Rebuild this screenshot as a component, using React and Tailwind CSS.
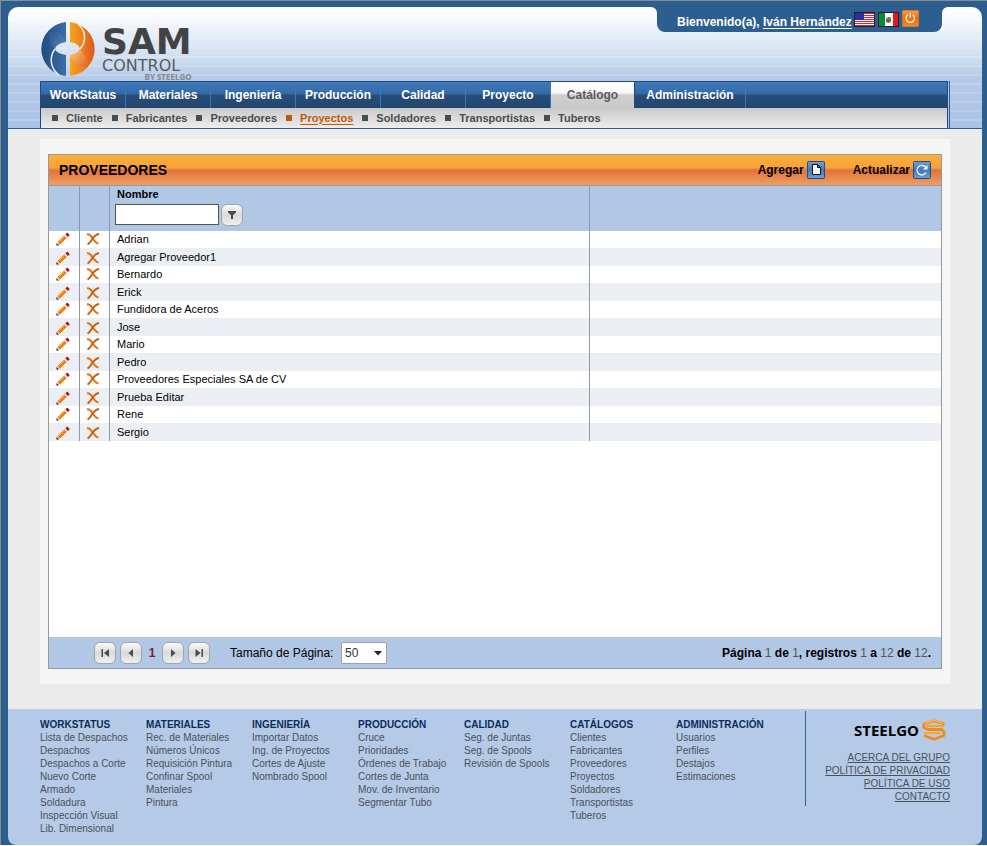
import React from "react";

const NAV = ["WorkStatus", "Materiales", "Ingeniería", "Producción", "Calidad", "Proyecto", "Catálogo", "Administración"];
const SUBNAV = ["Cliente", "Fabricantes", "Proveedores", "Proyectos", "Soldadores", "Transportistas", "Tuberos"];
const ROWS = [
  "Adrian", "Agregar Proveedor1", "Bernardo", "Erick", "Fundidora de Aceros", "Jose", "Mario", "Pedro",
  "Proveedores Especiales SA de CV", "Prueba Editar", "Rene", "Sergio",
];
const FOOTER = [
  ["WORKSTATUS", ["Lista de Despachos", "Despachos", "Despachos a Corte", "Nuevo Corte", "Armado", "Soldadura", "Inspección Visual", "Lib. Dimensional"]],
  ["MATERIALES", ["Rec. de Materiales", "Números Únicos", "Requisición Pintura", "Confinar Spool", "Materiales", "Pintura"]],
  ["INGENIERÍA", ["Importar Datos", "Ing. de Proyectos", "Cortes de Ajuste", "Nombrado Spool"]],
  ["PRODUCCIÓN", ["Cruce", "Prioridades", "Órdenes de Trabajo", "Cortes de Junta", "Mov. de Inventario", "Segmentar Tubo"]],
  ["CALIDAD", ["Seg. de Juntas", "Seg. de Spools", "Revisión de Spools"]],
  ["CATÁLOGOS", ["Clientes", "Fabricantes", "Proveedores", "Proyectos", "Soldadores", "Transportistas", "Tuberos"]],
  ["ADMINISTRACIÓN", ["Usuarios", "Perfiles", "Destajos", "Estimaciones"]],
];
const LEGAL = ["ACERCA DEL GRUPO", "POLÍTICA DE PRIVACIDAD", "POLÍTICA DE USO", "CONTACTO"];

function SamMark() {
  return (
    <svg width="56" height="56" viewBox="0 0 56 56" aria-hidden="true">
      <defs>
        <linearGradient id="samBlue" x1="0" x2="1"><stop offset="0" stopColor="#1f4c7e" /><stop offset="1" stopColor="#3b6ea8" /></linearGradient>
        <linearGradient id="samOrange" x1="0" x2="1"><stop offset="0" stopColor="#f7a51d" /><stop offset="1" stopColor="#dd5a1c" /></linearGradient>
        <linearGradient id="samBlueGlow" x1="0" x2="1" y2="1"><stop offset="0" stopColor="#2c5c95" /><stop offset="1" stopColor="#7da3d2" /></linearGradient>
        <linearGradient id="samOrangeGlow" x1="0" y1="0" x2="1" y2="1"><stop offset="0" stopColor="#ffd39a" /><stop offset="1" stopColor="#e2641d" /></linearGradient>
      </defs>
      <path d="M26 1.100A27 27 0 0 0 26 54.900V34C20 33 16 31 15 28C16 24 20 22 26 21Z" fill="url(#samBlue)" />
      <path d="M30 1.100A27 27 0 0 1 30 54.900V34C36 33 39 31 40 28C39 24 36 22 30 21Z" fill="url(#samOrange)" />
      <path d="M8 11C16 9 23 12 26 21C20 22 16 24 15 28Q8 20 8 11Z" fill="url(#samBlueGlow)" opacity=".4" />
      <path d="M47 45C39 47 33 44 30 34C36 33 39 31 40 28Q47 36 47 45Z" fill="url(#samOrangeGlow)" opacity=".8" />
      <path d="M15 28C9 36 10 47 19 54" fill="none" stroke="#e8f0fa" strokeWidth="1.500" />
      <path d="M40 28C47 20 46 9 37 2" fill="none" stroke="#f6efe6" strokeWidth="1.500" />
    </svg>
  );
}

function UsFlag() {
  return (
    <svg width="21" height="15" viewBox="0 0 21 15" aria-hidden="true" shapeRendering="crispEdges">
      <rect width="21" height="15" fill="#222" />
      <rect x="1" y="1" width="19" height="13" fill="#fff" />
      {[1, 3, 5, 7, 9, 11, 13].map((y) => <rect key={y} x="1" y={y} width="19" height="1" fill="#e0202c" />)}
      <rect x="1" y="1" width="9" height="7" fill="#2b2fa3" />
    </svg>
  );
}

function MxFlag() {
  return (
    <svg width="21" height="15" viewBox="0 0 21 15" aria-hidden="true">
      <rect width="21" height="15" fill="#222" />
      <rect x="1" y="1" width="6" height="13" fill="#0a8a3c" />
      <rect x="7" y="1" width="8" height="13" fill="#fff" />
      <rect x="15" y="1" width="5" height="13" fill="#f0141e" />
      <path d="M8 8C8 5 12 4 13 6V9L11 11L8 10Z" fill="#5b6a45" />
      <path d="M9 7L11 6L12 8" stroke="#a08050" fill="none" />
    </svg>
  );
}

function Power() {
  return (
    <svg width="17" height="17" viewBox="0 0 17 17" aria-hidden="true">
      <defs><linearGradient id="pw" x2="0" y2="1"><stop offset="0" stopColor="#f5a04c" /><stop offset=".5" stopColor="#ec6d0a" /><stop offset="1" stopColor="#f28a28" /></linearGradient></defs>
      <rect x=".5" y=".5" width="16" height="16" rx="1" fill="url(#pw)" stroke="#e0741e" />
      <path d="M5.800 4.800A4.200 4.200 0 1 0 10.800 4.800" fill="none" stroke="#fff" strokeWidth="1.200" />
      <path d="M8.300 3V8" stroke="#fff" strokeWidth="1.200" />
    </svg>
  );
}

function ActionIcon({ kind }) {
  return (
    <svg width="18" height="18" viewBox="0 0 18 18" aria-hidden="true">
      <defs><linearGradient id="act" x2="0" y2="1"><stop offset="0" stopColor="#6f9fdb" /><stop offset=".5" stopColor="#3f78bd" /><stop offset="1" stopColor="#6d9fda" /></linearGradient></defs>
      <rect x=".5" y=".5" width="17" height="17" rx="1" fill="url(#act)" stroke="#244d80" />
      {kind === "new" ? (
        <path d="M5.500 3.500H10.500L13.500 6.500V13.500H5.500ZM10.500 3.500V6.500H13.500" fill="#f4f4f4" stroke="#111" />
      ) : (
        <>
          <path d="M13 11.500A4.800 4.800 0 1 1 12.500 6" fill="none" stroke="#fff" strokeWidth="1.200" />
          <path d="M14.500 4V8.500H10Z" fill="#fff" />
        </>
      )}
    </svg>
  );
}

function Pencil() {
  return (
    <svg width="14" height="14" viewBox="0 0 14 14" aria-hidden="true" className="block">
      <path d="M2.500 11.500L9.500 4.800" stroke="#f47a0c" strokeWidth="3.600" />
      <path d="M2.400 10.300L8.600 4.400" stroke="#ffab45" strokeWidth="1" />
      <path d="M9.500 3L11.300 4.900" stroke="#f3e6d8" strokeWidth="1" />
      <path d="M10.600 3.700L12.600 1.900" stroke="#b01218" strokeWidth="3.600" />
      <path d="M.5 13.500V11L3 13.500Z" fill="#111" />
    </svg>
  );
}

function Cross() {
  return (
    <svg width="14" height="14" viewBox="0 0 14 14" aria-hidden="true" className="block" fill="none">
      <path d="M1 2.500C3.500 1.500 5 4 6.500 6.300C8.500 9 10.500 11.200 12.500 11.500" stroke="#e8700f" strokeWidth="2" />
      <path d="M13 2C9.500 2.500 7.500 5.200 6 7.500C4.500 9.800 3 11.800 1.500 12.500" stroke="#c85c0c" strokeWidth="1.800" />
    </svg>
  );
}

const GLYPHS = {
  first: "M7.500 7H9V15H7.500ZM15 7V15L10 11Z",
  prev: "M13 7V15L8.500 11Z",
  next: "M9 7V15L13.500 11Z",
  last: "M7.500 7V15L12.500 11ZM13.500 7H15V15H13.500Z",
  filter: "M7 7H15V8.500L12 11V15H10V11L7 8.500Z",
};

function GlossyButton({ glyph, label }) {
  return (
    <button type="button" aria-label={label} className="size-[22px] shrink-0 rounded-[6px] border border-[#a4a4a4] bg-linear-to-b from-[#fbfbfb] via-[#d9d9d9] to-[#f0f0f0]">
      <svg width="22" height="22" viewBox="0 0 22 22" aria-hidden="true" className="-m-px block">
        <path d={GLYPHS[glyph]} fill="#4a4a4a" />
      </svg>
    </button>
  );
}

function SteelgoMark() {
  return (
    <svg width="24" height="22" viewBox="0 0 24 22" aria-hidden="true">
      <path d="M22.500 5L12 1.800L1.800 5V8.500L6 10.500H19.500L22 12.500V16.500L12 20.200L2 16.500" fill="none" stroke="#f58a12" strokeWidth="2.800" strokeLinejoin="round" />
      <path d="M4.500 7H22M2 14H18.500" fill="none" stroke="#f9a32a" strokeWidth="1.800" />
      <path d="M21 4.500L12 1.500L3 4.500" fill="none" stroke="#ffc45c" />
    </svg>
  );
}

function Header() {
  return (
    <header className="overflow-hidden rounded-t-[10px] border-b border-[#2d5e90] bg-[repeating-linear-gradient(to_bottom,transparent_0_4px,rgba(255,255,255,.15)_4px_6px,transparent_6px_9px),linear-gradient(to_bottom,#ffffff_0,#f3f7fc_15px,#cfdef1_50px,#b6cae7_72px,#a9c3e6_121px)] px-8">
      <div className="flex h-[74px] items-start justify-between">
        <a href="#inicio" aria-label="SAM Control by Steelgo" className="flex items-start gap-[6px] pt-[14px]">
          <SamMark />
          <span className="flex flex-col pt-1 font-['DejaVu_Sans',sans-serif]">
            <span className="text-[36px] leading-[34px] font-bold text-[#434345]">SAM</span>
            <span className="text-[16px] leading-[13px] text-[#5a5a5c]">CONTROL</span>
            <span className="self-end font-['Open_Sans',sans-serif] text-[8px] leading-[10px] font-bold text-[#85878a]">BY STEELGO</span>
          </span>
        </a>
        <div className="mr-[2px] flex items-start">
          <svg width="6" height="6" viewBox="0 0 6 6" aria-hidden="true"><path d="M0 0H6V6A6 6 0 0 0 0 0Z" fill="#2d5e90" /></svg>
          <div className="flex h-[25px] w-[285px] items-start rounded-b-[8px] bg-[#2d5e90] pl-5 text-[12px] font-bold text-white">
            <p className="w-[177px] pt-[7px] leading-4 whitespace-nowrap">
              Bienvenido(a), <a href="#perfil" className="underline underline-offset-2">Iván Hernández</a>
            </p>
            <div className="flex items-start gap-[3px] pt-[3px]">
              <button type="button" aria-label="English" className="pt-[2px]"><UsFlag /></button>
              <button type="button" aria-label="Español" className="pt-[2px]"><MxFlag /></button>
              <button type="button" aria-label="Salir"><Power /></button>
            </div>
          </div>
          <svg width="6" height="6" viewBox="0 0 6 6" aria-hidden="true"><path d="M6 0H0V6A6 6 0 0 1 6 0Z" fill="#2d5e90" /></svg>
        </div>
      </div>
      <div className="border-r border-[#2d5e90] pr-px">
        <div className="border-t border-r border-[#1f4b7a]">
          <nav aria-label="Principal" className="flex h-[26px] bg-[linear-gradient(to_bottom,#4079bd_0,#3369a6_12px,#274d79_13px,#23466d_26px)] text-[12px] font-bold">
            {NAV.map((n) => (
              <a
                key={n}
                href={"#" + n}
                aria-current={n === "Catálogo" ? "page" : undefined}
                className={
                  n === "Catálogo"
                    ? "flex w-[84px] items-center justify-center border-r border-[#1f4b7a] bg-[linear-gradient(to_bottom,#ffffff_0,#f6f6f6_11px,#cfcfcf_13px,#c9c9c9_26px)] text-[#5b5b5b]"
                    : n === "Administración"
                      ? "flex w-[111px] items-center justify-center border-r border-[#3f74b3] text-white"
                      : "flex w-[85px] items-center justify-center border-r border-[#3f74b3] text-white first:w-[86px] first:border-l first:border-l-[#1f4b7a]"
                }
              >
                {n}
              </a>
            ))}
          </nav>
          <nav aria-label="Catálogo" className="flex h-5 items-center gap-[9px] border-l border-[#1f4b7a] bg-linear-to-b from-[#c9c9c9] to-[#ededed] pl-[11px] text-[11px] font-bold text-[#474d4f]">
            {SUBNAV.map((s) => (
              <a
                key={s}
                href={"#" + s}
                className={s === "Proyectos" ? "flex items-center gap-2 text-[#c15a05]" : "flex items-center gap-2"}
              >
                <span className="size-[6px] bg-current" />
                <span className={s === "Proyectos" ? "underline underline-offset-2" : ""}>{s}</span>
              </a>
            ))}
          </nav>
        </div>
      </div>
    </header>
  );
}

function Grid() {
  return (
    <section className="border border-[#999]">
      <div className="flex h-[31px] items-center justify-between border-b border-[#999] bg-[linear-gradient(to_bottom,#fab03a_0,#f6a23a_13px,#e2733b_15px,#ee9e62_30px)] px-[10px]">
        <h1 className="text-[14px] leading-4 font-bold">PROVEEDORES</h1>
        <div className="flex gap-7 text-[12px] font-bold">
          <button type="button" className="flex items-center gap-[3px]">Agregar <ActionIcon kind="new" /></button>
          <button type="button" className="flex items-center gap-[3px]">Actualizar <ActionIcon kind="refresh" /></button>
        </div>
      </div>
      <div className="min-h-[451px] bg-white">
        <table className="w-full table-fixed border-separate border-spacing-0 text-[11px]">
          <colgroup>
            <col className="w-[31px]" />
            <col className="w-[30px]" />
            <col className="w-[480px]" />
            <col />
          </colgroup>
          <thead>
            <tr className="h-[45px] bg-[#b1c7e6]">
              <th className="border-r border-[#8f98a5] p-0" aria-label="Editar" />
              <th className="border-r border-[#8f98a5] p-0" aria-label="Borrar" />
              <th className="border-r border-[#8f98a5] p-0 pl-[5px] text-left align-top">
                <label htmlFor="nombre" className="block pl-[2px] leading-4 font-bold">Nombre</label>
                <span className="flex gap-[2px] pt-[2px]">
                  <input id="nombre" type="text" className="h-[21px] w-[104px] border border-[#555] bg-white px-1 font-normal" />
                  <GlossyButton glyph="filter" label="Filtrar" />
                </span>
              </th>
              <th className="p-0" aria-label="Detalle" />
            </tr>
          </thead>
          <tbody>
            {ROWS.map((r) => (
              <tr key={r} className="h-[17px] bg-white odd:align-top even:h-[18px] even:bg-[#ebeff4]">
                <td className="border-r border-[#8f98a5] p-0 pl-[7px]"><button type="button" aria-label={"Editar " + r} className="block pt-px"><Pencil /></button></td>
                <td className="border-r border-[#8f98a5] p-0 pl-[6px]"><button type="button" aria-label={"Borrar " + r} className="block pt-px"><Cross /></button></td>
                <td className="border-r border-[#8f98a5] p-0 pl-[7px] leading-4">{r}</td>
                <td className="p-0" />
              </tr>
            ))}
          </tbody>
        </table>
      </div>
      <div className="flex h-[31px] items-center justify-between bg-[#b1c7e6] pr-[10px] pl-[45px] text-[12px]">
        <div className="flex items-center">
          <div className="flex items-center gap-1">
            <GlossyButton glyph="first" label="Primera página" />
            <GlossyButton glyph="prev" label="Página anterior" />
            <span className="w-3 text-center font-bold text-[#8c1a1a]">1</span>
            <GlossyButton glyph="next" label="Página siguiente" />
            <GlossyButton glyph="last" label="Última página" />
          </div>
          <label htmlFor="tam" className="w-[131px] pl-5 whitespace-nowrap">Tamaño de Página:</label>
          <span className="relative">
            <select id="tam" defaultValue="50" className="block h-[22px] w-[46px] appearance-none rounded-[2px] border border-[#a0a0a0] bg-white pl-[3px] text-[12px] text-[#333]">
              <option>10</option>
              <option>20</option>
              <option>50</option>
            </select>
            <svg width="8" height="5" viewBox="0 0 8 5" aria-hidden="true" className="pointer-events-none absolute top-[9px] right-[5px]"><path d="M0 0H8L4 4.500Z" fill="#222" /></svg>
          </span>
        </div>
        <p className="font-bold">
          Página <span className="font-normal text-[#555]">1</span> de <span className="font-normal text-[#555]">1</span>, registros{" "}
          <span className="font-normal text-[#555]">1</span> a <span className="font-normal text-[#555]">12</span> de{" "}
          <span className="font-normal text-[#555]">12</span>.
        </p>
      </div>
    </section>
  );
}

function Footer() {
  return (
    <footer className="flex justify-between rounded-b-[8px] bg-[#b4cae7] px-8 pt-[2px] pb-[10px] text-[10px] leading-[13px] text-[#4a5158]">
      <div className="flex pt-2">
        {FOOTER.map(([title, items]) => (
          <div key={title} className="w-[106px] whitespace-nowrap">
            <h2 className="leading-3 font-bold text-[#0d2c59]">{title}</h2>
            <ul>
              {items.map((i) => <li key={i}><a href={"#" + i}>{i}</a></li>)}
            </ul>
          </div>
        ))}
      </div>
      <div className="h-[95px] w-[145px] border-l border-[#2f6299] pt-2">
        <div className="flex items-center justify-end gap-[3px] pr-1">
          <span className="font-['Open_Sans',sans-serif] text-[15px] leading-[22px] font-bold text-black">STEELGO</span>
          <SteelgoMark />
        </div>
        <ul className="pt-[10px] text-right whitespace-nowrap">
          {LEGAL.map((l) => <li key={l}><a href={"#" + l} className="underline">{l}</a></li>)}
        </ul>
      </div>
    </footer>
  );
}

export default function App() {
  return (
    <div className="border-t border-l border-[#8c8c8c] bg-[#2d5e90] pt-[6px] pr-[5px] pl-[7px] font-['Liberation_Sans',Arial,sans-serif] text-black">
      <Header />
      <main className="bg-[#ebebeb] px-8 pt-[10px] pb-[25px]">
        <div className="bg-[#f5f5f5] px-2 py-[15px]">
          <Grid />
        </div>
      </main>
      <Footer />
    </div>
  );
}
